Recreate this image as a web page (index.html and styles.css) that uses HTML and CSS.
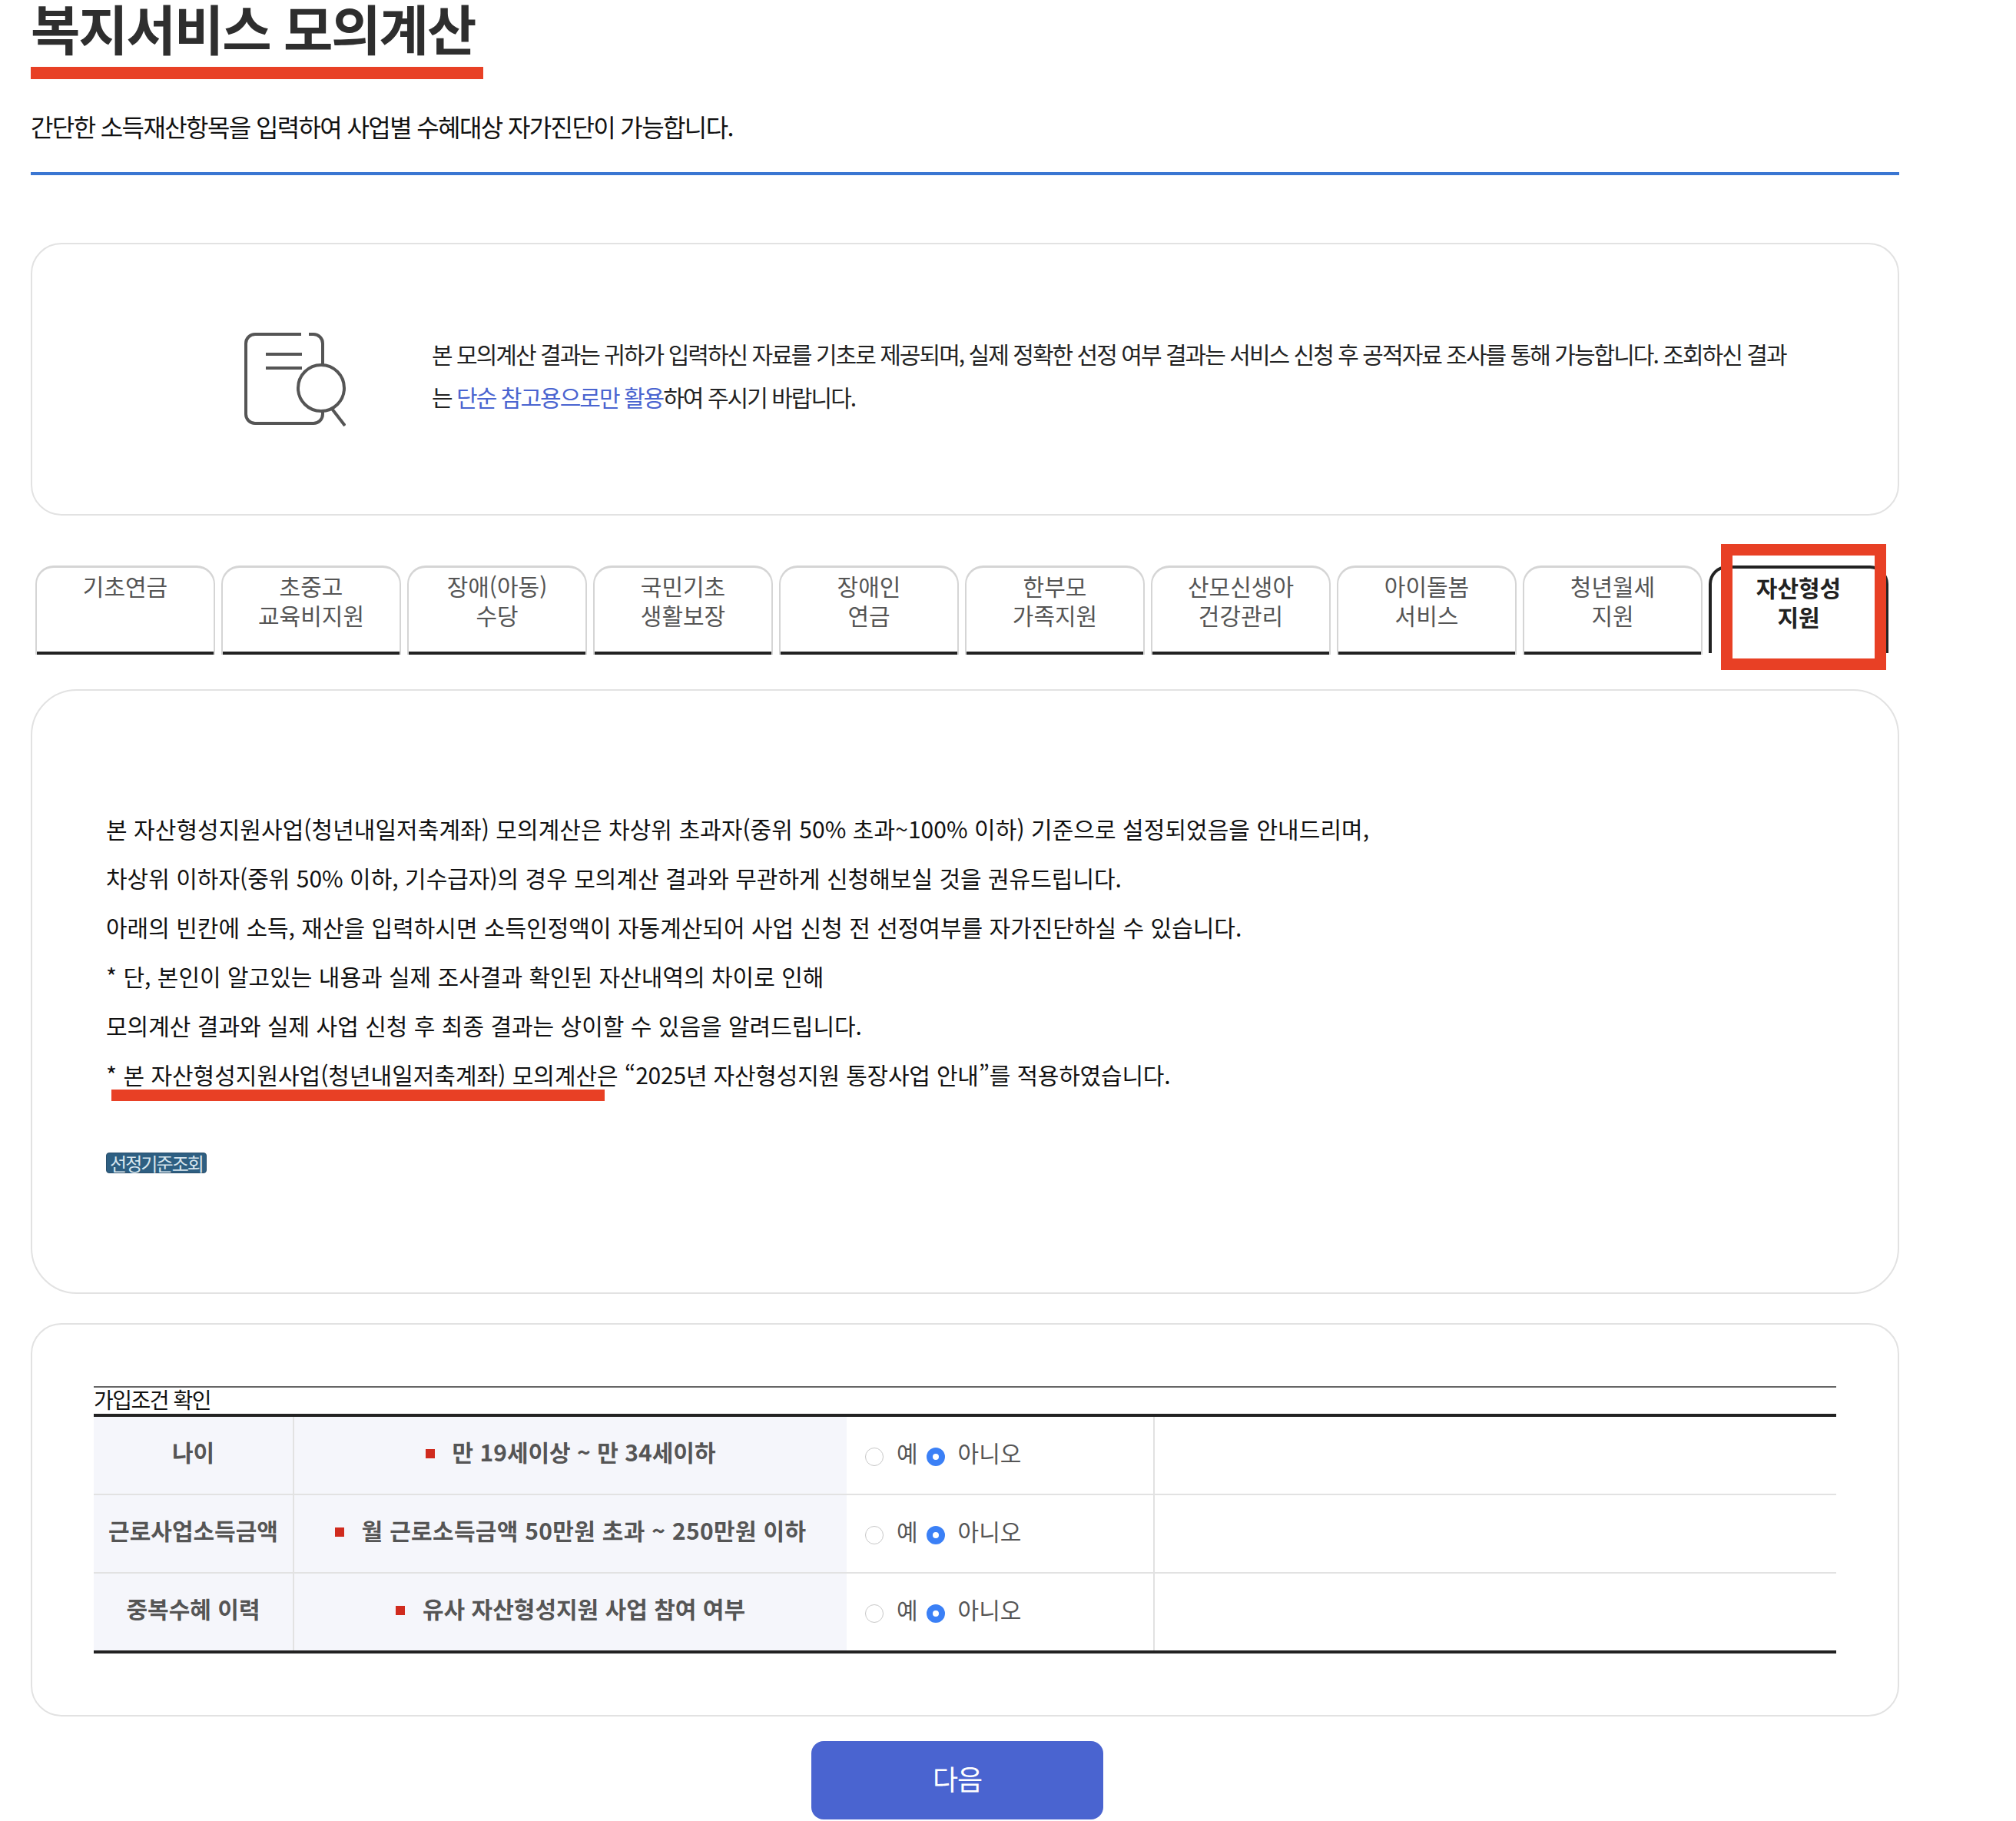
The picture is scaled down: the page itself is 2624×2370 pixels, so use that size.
FILE: index.html
```html
<!DOCTYPE html>
<html lang="ko">
<head>
<meta charset="utf-8">
<title>복지서비스 모의계산</title>
<link rel="stylesheet" href="styles.css">
</head>
<body>
<main class="page">
  <header class="head">
    <div class="title-wrap">
      <h1 class="title">복지서비스 모의계산</h1>
      <div class="title-mark"></div>
    </div>
    <p class="subtitle">간단한 소득재산항목을 입력하여 사업별 수혜대상 자가진단이 가능합니다.</p>
  </header>

  <section class="notice">
    <svg class="notice-icon" width="132" height="122" viewBox="0 0 132 122" fill="none" stroke="#555" stroke-width="4">
      <path d="M74 2H14A12 12 0 0 0 2 14V106A12 12 0 0 0 14 118H90A12 12 0 0 0 102 106V102"/>
      <path d="M84 2H90A12 12 0 0 1 102 14V42"/>
      <path d="M28 28H75M28 46H75"/>
      <ellipse cx="100" cy="72" rx="30" ry="30"/>
      <path d="M114 99L131 121"/>
    </svg>
    <p class="notice-text">본 모의계산 결과는 귀하가 입력하신 자료를 기초로 제공되며, 실제 정확한 선정 여부 결과는 서비스 신청 후 공적자료 조사를 통해 가능합니다. 조회하신 결과<br>는 <span class="notice-em">단순 참고용으로만 활용</span>하여 주시기 바랍니다.</p>
  </section>

  <nav class="tabs">
    <a class="tab">기초연금</a>
    <a class="tab">초중고<br>교육비지원</a>
    <a class="tab">장애(아동)<br>수당</a>
    <a class="tab">국민기초<br>생활보장</a>
    <a class="tab">장애인<br>연금</a>
    <a class="tab">한부모<br>가족지원</a>
    <a class="tab">산모신생아<br>건강관리</a>
    <a class="tab">아이돌봄<br>서비스</a>
    <a class="tab">청년월세<br>지원</a>
    <a class="tab tab-active">자산형성<br>지원</a>
  </nav>

  <section class="intro">
    <p class="intro-line intro-first">본 자산형성지원사업(청년내일저축계좌) 모의계산은 차상위 초과자(중위 50% 초과~100% 이하) 기준으로 설정되었음을 안내드리며,</p>
    <p class="intro-line">차상위 이하자(중위 50% 이하, 기수급자)의 경우 모의계산 결과와 무관하게 신청해보실 것을 권유드립니다.</p>
    <p class="intro-line">아래의 빈칸에 소득, 재산을 입력하시면 소득인정액이 자동계산되어 사업 신청 전 선정여부를 자가진단하실 수 있습니다.</p>
    <p class="intro-line">* 단, 본인이 알고있는 내용과 실제 조사결과 확인된 자산내역의 차이로 인해</p>
    <p class="intro-line">모의계산 결과와 실제 사업 신청 후 최종 결과는 상이할 수 있음을 알려드립니다.</p>
    <p class="intro-line"><span class="intro-mark">* 본 자산형성지원사업(청년내일저축계좌) 모의계산은</span> <span class="intro-tail">“2025년 자산형성지원 통장사업 안내”를 적용하였습니다.</span></p>
    <button class="lookup" type="button">선정기준조회</button>
  </section>

  <section class="check">
    <table class="check-table">
      <caption class="check-caption">가입조건 확인</caption>
      <colgroup>
        <col class="col-a"><col class="col-b"><col class="col-c"><col>
      </colgroup>
      <tbody>
        <tr>
          <th class="cell-head">나이</th>
          <td class="cell-cond"><span class="bullet"></span>만 19세이상 ~ 만 34세이하</td>
          <td class="cell-radio"><label class="opt"><input class="radio" type="radio" name="a">예</label><label class="opt"><input class="radio" type="radio" name="a" checked>아니오</label></td>
          <td class="cell-blank"></td>
        </tr>
        <tr>
          <th class="cell-head">근로사업소득금액</th>
          <td class="cell-cond cell-wide"><span class="bullet"></span>월 근로소득금액 50만원 초과 ~ 250만원 이하</td>
          <td class="cell-radio"><label class="opt"><input class="radio" type="radio" name="b">예</label><label class="opt"><input class="radio" type="radio" name="b" checked>아니오</label></td>
          <td class="cell-blank"></td>
        </tr>
        <tr class="row-last">
          <th class="cell-head">중복수혜 이력</th>
          <td class="cell-cond"><span class="bullet"></span>유사 자산형성지원 사업 참여 여부</td>
          <td class="cell-radio"><label class="opt"><input class="radio" type="radio" name="c">예</label><label class="opt"><input class="radio" type="radio" name="c" checked>아니오</label></td>
          <td class="cell-blank"></td>
        </tr>
      </tbody>
    </table>
  </section>

  <div class="actions">
    <button class="next" type="button">다음</button>
  </div>
</main>
</body>
</html>
```

FILE: styles.css
```css
*, *::before, *::after { box-sizing: border-box; }
html, body { margin: 0; padding: 0; background: #fff; }
body {
  font-family: "Noto Sans CJK KR", "Noto Sans", sans-serif;
  color: #222;
}
p, h1 { margin: 0; }
.page { width: 2472px; padding-left: 40px; }

/* Header */
.head { border-bottom: 4px solid #3a76d2; height: 228px; }
.title-wrap { width: 589px; }
.title {
  font-size: 70px;
  line-height: 72px;
  font-weight: 700;
  color: #2e2e2e;
  letter-spacing: -2.1px;
  white-space: nowrap;
}
.title-mark { height: 16px; margin-top: 15px; background: #e84025; }
.subtitle {
  margin-top: 41px;
  font-size: 32px;
  line-height: 40px;
  color: #111;
  letter-spacing: -1.62px;
  white-space: nowrap;
}

/* Notice */
.notice {
  margin-top: 88px;
  height: 355px;
  border: 2px solid #e2e2e2;
  border-radius: 40px;
  display: flex;
  align-items: center;
  padding-left: 276px;
}
.notice-icon { flex: none; }
.notice-text {
  margin: 0 0 12px 112px;
  font-size: 30px;
  line-height: 56px;
  color: #222;
  letter-spacing: -1.97px;
  white-space: nowrap;
}
.notice-em { color: #4a64d0; }

/* Tabs */
.tabs { display: flex; gap: 8px; margin-top: 65px; padding-left: 6px; }
.tab {
  position: relative;
  flex: none;
  width: 234px;
  height: 116px;
  padding-top: 4px;
  border: solid #d5d5d5;
  border-width: 3px 2px 0;
  border-radius: 24px 24px 0 0;
  box-shadow: inset 0 -4px 0 #222;
  text-align: center;
  font-size: 30px;
  line-height: 38px;
  color: #555;
  letter-spacing: 0;
}
.tab-active {
  height: 114px;
  padding-top: 5px;
  border-color: #222;
  border-width: 4px 4px 0;
  box-shadow: none;
  color: #222;
  font-weight: 700;
}
.tab-active::after {
  content: "";
  position: absolute;
  left: 12px;
  right: -1px;
  top: -32px;
  height: 164px;
  border: 15px solid #e84025;
}

/* Intro */
.intro {
  margin-top: 45px;
  height: 787px;
  border: 2px solid #e2e2e2;
  border-radius: 60px;
  padding: 147px 96px 0;
}
.intro-line {
  font-size: 30px;
  line-height: 64px;
  color: #111;
  letter-spacing: 0;
  white-space: nowrap;
}
.intro-first { letter-spacing: 0.05px; }
.intro-tail { letter-spacing: -0.2px; }
.intro-mark { position: relative; }
.intro-mark::after {
  content: "";
  position: absolute;
  left: 7px;
  right: 18px;
  top: 42px;
  height: 15px;
  background: #e84025;
}
.lookup {
  display: block;
  margin-top: 70px;
  width: 131px;
  height: 27px;
  padding: 0;
  border: 1px solid #2a4f6c;
  border-radius: 4px;
  background: #2e5f82;
  color: #d8e6ee;
  font-family: inherit;
  font-size: 24px;
  line-height: 25px;
  letter-spacing: -1.9px;
  white-space: nowrap;
}

/* Check table */
.check {
  margin-top: 38px;
  height: 512px;
  border: 2px solid #e2e2e2;
  border-radius: 40px;
  padding: 80px 80px 0;
}
.check-table {
  width: 100%;
  table-layout: fixed;
  border-collapse: separate;
  border-spacing: 0;
  border-top: 4px solid #222;
  border-bottom: 4px solid #222;
}
.check-caption {
  height: 36px;
  border-top: 2px solid #666;
  text-align: left;
  font-size: 28px;
  line-height: 30px;
  color: #111;
  letter-spacing: -1.5px;
}
.col-a { width: 261px; }
.col-b { width: 719px; }
.col-c { width: 401px; }
.check-table tr { height: 102px; }
.check-table .row-last { height: 100px; }
.check-table th, .check-table td {
  padding: 0 0 10px;
  border-bottom: 2px solid #e2e2e2;
  font-size: 30px;
  line-height: 40px;
}
.check-table .row-last th, .check-table .row-last td { border-bottom: 0; }
.cell-head {
  background: #f5f6fb;
  border-right: 2px solid #e2e2e2;
  color: #555;
  font-weight: 700;
  text-align: center;
}
.cell-cond {
  background: #f5f6fb;
  color: #555;
  font-weight: 700;
  text-align: center;
}
.cell-wide { letter-spacing: 0.3px; }
.bullet {
  display: inline-block;
  width: 12px;
  height: 12px;
  margin-right: 23px;
  background: #d02b1e;
  vertical-align: 4px;
}
.check-table .cell-radio {
  padding: 0 0 12px 24px;
  border-right: 2px solid #e2e2e2;
  color: #555;
}
.opt { display: inline-flex; align-items: center; margin-right: 11px; vertical-align: middle; }
.radio {
  appearance: none;
  flex: none;
  width: 24px;
  height: 24px;
  margin: 12px 17px 0 0;
  border: 1px solid #c8c8c8;
  border-radius: 50%;
  background: #fff;
}
.radio:checked {
  border: 8px solid #3b80f6;
  background: #fff;
}

/* Next */
.actions { display: flex; justify-content: center; margin-top: 32px; padding-right: 20px; width: 2432px; }
.next {
  width: 380px;
  height: 102px;
  padding: 0 0 6px;
  border: 0;
  border-radius: 16px;
  background: #4a64d0;
  color: #fff;
  font-family: inherit;
  font-size: 36px;
  letter-spacing: -1px;
}
```
